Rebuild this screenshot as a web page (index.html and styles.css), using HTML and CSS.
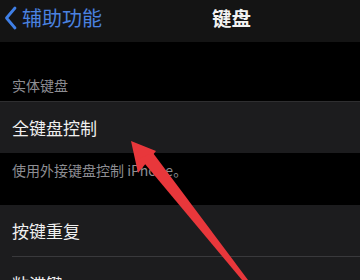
FILE: index.html
```html
<!DOCTYPE html>
<html>
<head>
<meta charset="utf-8">
<link rel="stylesheet" href="styles.css">
</head>
<body>
<div class="screen">
  <div class="nav">
    <div class="back">
      <svg class="chev" width="14" height="24" viewBox="0 0 14 24"><path d="M12 2 L3.5 12 L12 22" fill="none" stroke="#3f7fe6" stroke-width="2.8" stroke-linecap="round" stroke-linejoin="round"/></svg>
      <span class="back-text">辅助功能</span>
    </div>
    <div class="title">键盘</div>
  </div>
  <div class="section-head">实体键盘</div>
  <div class="group top">
    <div class="row"><span class="label">全键盘控制</span></div>
  </div>
  <div class="section-foot">使用外接键盘控制 iPhone。</div>
  <div class="group">
    <div class="row"><span class="label">按键重复</span></div>
    <div class="row sep"><span class="label">粘滞键</span></div>
  </div>
  <svg class="arrow" width="360" height="280" viewBox="0 0 360 280">
    <polygon points="131,141 156,151 138,173" fill="#e8373b"/>
    <polygon points="140,158 153,153 248,280 242,280" fill="#e8373b"/>
  </svg>
</div>
</body>
</html>
```
FILE: styles.css
```css
html, body { margin: 0; padding: 0; background: #000; }
.screen {
  position: relative;
  width: 360px;
  height: 280px;
  overflow: hidden;
  background: #000;
  font-family: "Noto Sans CJK SC", "Noto Sans", sans-serif;
}
.nav {
  height: 42px;
  background: #141414;
  display: flex;
  align-items: center;
}
.back {
  display: flex;
  align-items: center;
  padding-left: 3px;
  height: 36px;
  margin-top: -6px;
}
.chev { display: block; margin-right: 5px; }
.back-text {
  color: #4a82e0;
  font-size: 20px;
  line-height: 24px;
}
.title {
  margin-left: 110px;
  margin-top: -6px;
  color: #f2f2f2;
  font-size: 19.5px;
  font-weight: 700;
  line-height: 24px;
}
.section-head {
  height: 59px;
  box-sizing: border-box;
  padding: 34px 0 0 12px;
  color: #8e8e93;
  font-size: 14px;
  line-height: 18px;
}
.group { background: #1c1c1e; }
.group.top { border-top: 1px solid #2e2e30; }
.row {
  height: 51px;
  display: flex;
  align-items: center;
  padding-left: 12px;
}
.row.sep {
  height: 30px;
  align-items: flex-end;
  border-top: 1px solid #39393c;
  margin-left: 12px;
  padding-left: 0;
}
.label {
  color: #f0f0f0;
  font-size: 17px;
  line-height: 22px;
}
.row.sep .label { margin-bottom: -8px; }
.section-foot {
  height: 52px;
  box-sizing: border-box;
  padding: 8px 0 0 12px;
  color: #8e8e93;
  font-size: 14px;
  line-height: 18px;
}
.arrow { position: absolute; left: 0; top: 0; }
```
